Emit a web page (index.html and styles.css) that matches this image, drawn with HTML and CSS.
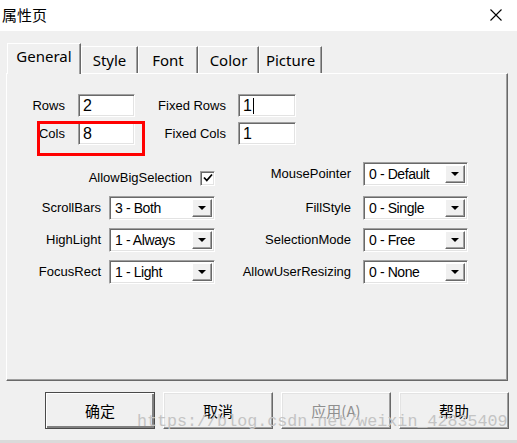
FILE: index.html
```html
<!DOCTYPE html>
<html>
<head>
<meta charset="utf-8">
<link rel="stylesheet" href="styles.css">
</head>
<body>
<div class="titlebar">
  <span class="title">属性页</span>
  <svg class="close" width="12" height="12" viewBox="0 0 12 12"><path d="M0.5 0.5 L11.5 11.5 M11.5 0.5 L0.5 11.5" stroke="#000" stroke-width="1.1" fill="none"/></svg>
</div>
<div class="main">
  <div class="tabs">
    <div class="tab tab-sel">General</div>
    <div class="tab tab-style">Style</div>
    <div class="tab tab-font">Font</div>
    <div class="tab tab-color">Color</div>
    <div class="tab tab-picture">Picture</div>
  </div>
  <div class="panel">
    <div class="fields">
      <span class="lbl lbl-a">Rows</span>
      <div class="input">2</div>
      <span class="lbl lbl-b">Fixed Rows</span>
      <div class="input">1<span class="caret"></span></div>
      <span class="lbl lbl-a">Cols</span>
      <div class="input">8</div>
      <span class="lbl lbl-b">Fixed Cols</span>
      <div class="input">1</div>
    </div>
    <div class="mark"></div>
    <div class="props">
      <div class="chkcell"><span class="lbl">AllowBigSelection</span><span class="chk"><svg width="10" height="10" viewBox="0 0 10 10"><path d="M1 4.5 L3.8 7.5 L9 1.5" stroke="#000" stroke-width="1.8" fill="none"/></svg></span></div>
      <span class="lbl lbl-r top">MousePointer</span>
      <div class="select top">0 - Default<span class="drop"></span></div>

      <span class="lbl lbl-l">ScrollBars</span>
      <div class="select">3 - Both<span class="drop"></span></div>
      <span class="lbl lbl-r">FillStyle</span>
      <div class="select">0 - Single<span class="drop"></span></div>

      <span class="lbl lbl-l">HighLight</span>
      <div class="select">1 - Always<span class="drop"></span></div>
      <span class="lbl lbl-r">SelectionMode</span>
      <div class="select">0 - Free<span class="drop"></span></div>

      <span class="lbl lbl-l">FocusRect</span>
      <div class="select">1 - Light<span class="drop"></span></div>
      <span class="lbl lbl-r">AllowUserResizing</span>
      <div class="select">0 - None<span class="drop"></span></div>
    </div>
  </div>
  <div class="buttons">
    <div class="btn btn-default">确定</div>
    <div class="btn">取消</div>
    <div class="btn btn-disabled">应用(A)</div>
    <div class="btn">帮助</div>
  </div>
</div>
<div class="bottom"></div>
<div class="watermark">https://blog.csdn.net/weixin_42835409</div>
</body>
</html>
```
FILE: styles.css
```css
html, body {
  margin: 0;
  padding: 0;
}
body {
  width: 517px;
  height: 443px;
  background: #f0f0f0;
  font-family: "Liberation Sans", Arial, sans-serif;
  font-size: 13px;
  color: #000;
  position: relative;
  overflow: hidden;
}
.titlebar {
  height: 31px;
  background: #fff;
  display: flex;
  align-items: center;
  justify-content: space-between;
  padding: 0 15px 0 2px;
}
.title {
  font-family: "Noto Sans CJK SC", sans-serif;
  font-size: 15px;
  line-height: 18px;
  margin-top: -2px;
}
.close {
  display: block;
  margin-top: -1px;
}
.main {
  padding: 12px 0 0 6px;
}
.tabs {
  display: flex;
  align-items: flex-end;
  height: 30px;
  padding-left: 1px;
  position: relative;
  z-index: 2;
}
.tab {
  box-sizing: border-box;
  height: 27px;
  border-top: 1px solid #fff;
  border-left: 1px solid #fff;
  border-right: 1px solid #696969;
  box-shadow: inset -1px 0 0 #a0a0a0;
  font-family: "Noto Sans", sans-serif;
  font-size: 15px;
  line-height: 26px;
  text-align: center;
  background: #f0f0f0;
}
.tab-sel {
  width: 74px;
  height: 31px;
  margin-bottom: -1px;
  line-height: 24px;
}
.tab-style { width: 57px; }
.tab-font { width: 60px; }
.tab-color { width: 61px; }
.tab-picture { width: 63px; }
.panel {
  position: relative;
  box-sizing: border-box;
  width: 502px;
  height: 308px;
  border-top: 1px solid #fff;
  border-left: 1px solid #fff;
  border-right: 1px solid #696969;
  border-bottom: 1px solid #696969;
  box-shadow: inset -1px -1px 0 #a0a0a0;
}
.fields {
  display: grid;
  grid-template-columns: 71px 57px 103px 58px;
  grid-template-rows: 23px 23px;
  row-gap: 5px;
  margin-top: 20px;
}
.lbl {
  white-space: nowrap;
  line-height: 16px;
  align-self: center;
}
.lbl-a {
  text-align: right;
  padding-right: 13px;
}
.lbl-b {
  text-align: right;
  padding-right: 12px;
}
.input, .select {
  box-sizing: border-box;
  background: #fff;
  border: 1px solid;
  border-color: #a0a0a0 #fff #fff #a0a0a0;
  box-shadow: inset 1px 1px 0 #696969, inset -1px -1px 0 #e3e3e3;
  white-space: nowrap;
}
.input {
  font-size: 16px;
  line-height: 21px;
  padding-left: 4px;
  display: flex;
  align-items: center;
}
.caret {
  display: inline-block;
  width: 1px;
  height: 16px;
  background: #000;
  margin-left: 1px;
}
.mark {
  position: absolute;
  left: 30px;
  top: 47px;
  width: 108px;
  height: 35px;
  box-sizing: border-box;
  border: 3px solid #ff0000;
}
.props {
  display: grid;
  grid-template-columns: 102px 106px 148px 105px;
  grid-template-rows: 26px 24px 24px 24px;
  row-gap: 8px;
  margin-top: 17px;
}
.chkcell {
  grid-column: 1 / 3;
  display: flex;
  justify-content: flex-end;
  align-items: center;
  gap: 8px;
  align-self: end;
  margin-bottom: 2px;
}
.chk {
  box-sizing: border-box;
  width: 15px;
  height: 15px;
  background: #fff;
  border: 1px solid;
  border-color: #a0a0a0 #fff #fff #a0a0a0;
  box-shadow: inset 1px 1px 0 #696969, inset -1px -1px 0 #e3e3e3;
  display: flex;
  align-items: center;
  justify-content: center;
}
.chk svg {
  display: block;
}
.lbl-l {
  text-align: right;
  padding-right: 8px;
}
.lbl-r {
  text-align: right;
  padding-right: 12px;
}
.top {
  align-self: start;
}
.lbl.top {
  margin-top: 4px;
}
.select {
  height: 24px;
  position: relative;
  font-size: 14px;
  letter-spacing: -0.4px;
  line-height: 22px;
  padding-left: 5px;
}
.drop {
  position: absolute;
  right: 2px;
  top: 2px;
  width: 20px;
  height: 18px;
  box-sizing: border-box;
  background: #f0f0f0;
  border: 1px solid;
  border-color: #fff #696969 #696969 #fff;
  box-shadow: inset -1px -1px 0 #a0a0a0;
}
.drop::after {
  content: "";
  position: absolute;
  left: 5px;
  top: 6px;
  border-left: 4px solid transparent;
  border-right: 4px solid transparent;
  border-top: 4px solid #000;
}
.buttons {
  display: flex;
  justify-content: flex-end;
  gap: 8px;
  padding-right: 8px;
  margin-top: 11px;
}
.btn {
  box-sizing: border-box;
  width: 110px;
  height: 37px;
  border: 1px solid;
  border-color: #fff #696969 #696969 #fff;
  box-shadow: inset -1px -1px 0 #a0a0a0, inset 1px 1px 0 #e3e3e3;
  display: flex;
  align-items: center;
  justify-content: center;
  font-family: "Noto Sans CJK SC", sans-serif;
  font-size: 15px;
  background: #f0f0f0;
}
.btn-default {
  border: 1px solid #4a4a4a;
  box-shadow: inset 1px 1px 0 #fff, inset -2px -2px 0 #808080;
}
.btn-disabled {
  color: #8f8f8f;
}
.bottom {
  position: absolute;
  left: 0;
  bottom: 0;
  width: 517px;
  height: 3px;
  background: #dadada;
}
.watermark {
  position: absolute;
  left: 137px;
  top: 413px;
  font-family: "Liberation Mono", monospace;
  font-size: 16.7px;
  line-height: 17px;
  color: #c4c4c4;
  white-space: nowrap;
  pointer-events: none;
}
```
